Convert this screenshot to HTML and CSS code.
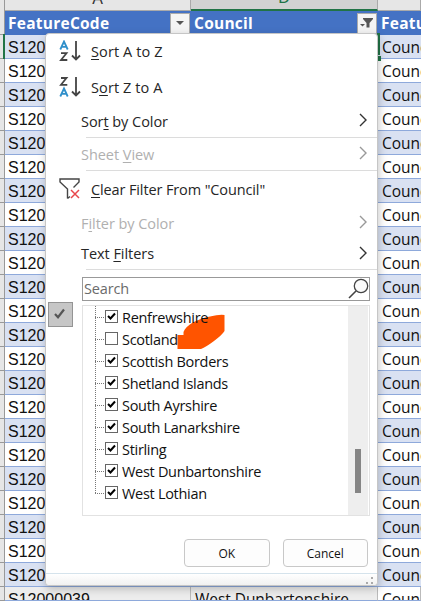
FILE: index.html
```html
<!DOCTYPE html>
<html lang="en">
<head>
<meta charset="utf-8">
<title>Council filter</title>
<link rel="stylesheet" href="styles.css">
</head>
<body>
<main class="sheet">
  <div class="letters"><i class="corner"></i><span>A</span><span class="selected">D</span><span></span></div>
  <div class="row head"><i class="rownum"></i><b>FeatureCode<span class="drop"><svg width="20" height="20"><path d="M6 8h8l-4 4z" fill="#555"/></svg></span></b><b>Council<span class="drop"><svg width="20" height="20"><path d="M6 5h10v1l-3.500 4v4.500h-3V10L6 6z" fill="#555"/><path d="M3 11h5l-2.500 2.500z" fill="#555"/></svg></span></b><b>FeatureType</b></div>
  <div id="rows"></div>
</main>
<i class="cell-edge"></i><i class="cell-handle"></i><i class="row-edge"></i>

<section class="menu">
  <div class="item sort"><svg class="icon" width="22" height="24"><g fill="none" stroke-width="1.800"><path d="M1.300 9.500L5 1.500l3.700 8M2.500 6.800h5" stroke="#2f8fca"/><path d="M2 13.200h5.500L2 20h6.300M17 1v18.500M13 15.500l4 4 4-4" stroke="#444"/></g></svg><span><u>S</u>ort A to Z</span></div>
  <div class="item sort"><svg class="icon" width="22" height="24"><g fill="none" stroke-width="1.800"><path d="M1.300 20.500L5 12.500l3.700 8M2.500 17.800h5" stroke="#2f8fca"/><path d="M2 2h5.500L2 8.800h6.300M17 1v18.500M13 15.500l4 4 4-4" stroke="#444"/></g></svg><span>S<u>o</u>rt Z to A</span></div>
  <div class="item color"><span>Sor<u>t</u> by Color</span><svg class="arrow" width="8" height="14"><path d="M1 1l6 6-6 6"/></svg></div>
  <hr>
  <div class="item view off"><span>Sheet <u>V</u>iew</span><svg class="arrow" width="8" height="14"><path d="M1 1l6 6-6 6"/></svg></div>
  <hr>
  <div class="item clear"><svg class="icon" width="22" height="22"><path d="M8.500 20.500V11L1 4V1h19v3l-5.500 5.500M8.500 20.500l2.500-2" fill="none" stroke="#444" stroke-width="1.400"/><path d="M12 12l8 8M20 12l-8 8" stroke="#e8474c" stroke-width="1.500"/></svg><span><u>C</u>lear Filter From "Council"</span></div>
  <div class="item filter off"><span>F<u>i</u>lter by Color</span><svg class="arrow" width="8" height="14"><path d="M1 1l6 6-6 6"/></svg></div>
  <div class="item text"><span>Text <u>F</u>ilters</span><svg class="arrow" width="8" height="14"><path d="M1 1l6 6-6 6"/></svg></div>
  <hr>
  <div class="search"><span>Search</span><svg width="22" height="22"><circle cx="14" cy="8" r="6.700" fill="#fafafa" stroke="#444" stroke-width="1.300"/><path d="M9 13l-7 7" stroke="#444" stroke-width="1.600"/></svg></div>
  <div class="list"><ul id="list"></ul><div class="track"><i></i></div></div>
  <div class="buttons"><button>OK</button><button>Cancel</button></div>
  <div class="foot"><svg width="8" height="8"><path d="M5 0h2v2H5zM0 5h2v2H0zM5 5h2v2H5z" fill="#aaa"/></svg></div>
  <span class="applied"><svg width="14" height="12"><path d="M2 6l3 3.200L11 1.500" fill="none" stroke="#555" stroke-width="2.200"/></svg></span>
  <svg class="scribble" width="48" height="36"><path d="M.5 35V21H6.500V18C9 11 20 5 33 2.500Q42 .3 47.500 1V17Q45 21 37 27Q29 33 24 35Z" fill="#ff5400"/></svg>
</section>
<script src="app.js"></script>
</body>
</html>
```
FILE: styles.css
```css
* { box-sizing: border-box; }
html, body { margin: 0; width: 421px; height: 601px; overflow: hidden; }
body { position: relative; background: #fff; font-family: "Open Sans", sans-serif; }
i { font-style: normal; }
.letters, .row { display: grid; grid-template-columns: 5px 186px 187px 43px; }
.letters { height: 11px; background: #e6e6e6; border-bottom: 1px solid #aaa; }
.letters span { display: flex; align-items: flex-end; justify-content: center; height: 10px; overflow: hidden; padding-bottom: 3px; border-right: 1px solid #aaa; font: 16px/16px "Liberation Sans", sans-serif; color: #333; }
.letters .selected { height: 11px; background: #d2d2d2; color: #217346; border-bottom: 2px solid #217346; }
.corner, .rownum { border-right: 1px solid #999; background: #e6e6e6; }
.row { height: 24px; }
.row span { overflow: hidden; white-space: nowrap; padding-left: 3px; font: 16px/25px "Liberation Sans", sans-serif; color: #111; border-bottom: 1px solid #8ea9db; }
.row .calibri { font: 15.5px/25px "Open Sans", sans-serif; letter-spacing: -.05px; padding-left: 4px; }
.row.odd span { background: #d9e1f2; }
.rownum { border-bottom: 1px solid #999; }
.row.last { height: 14px; overflow: hidden; }
.row.last span { background: #ededed; border-right: 1px solid #bbb; }
.row.last span:last-child { background: #fff; }
.head b { display: flex; justify-content: space-between; align-items: center; background: #4472c4; color: #fff; font: bold 15.5px/24px "Open Sans", sans-serif; padding-left: 3px; overflow: hidden; letter-spacing: .25px; }
.head .drop { display: block; width: 20px; height: 21px; margin: 1px 1px 0 0; padding: 0; border: 1px solid #ababab; background: #f4f4f4; line-height: 0; }
.drop svg { display: block; margin: -1px; }
.cell-edge { position: absolute; left: 377px; top: 33px; width: 3px; height: 22px; background: #217346; }
.cell-handle { position: absolute; left: 377px; top: 56px; width: 4px; height: 5px; background: #217346; }
.row-edge { position: absolute; left: 3px; top: 34px; width: 2px; height: 25px; background: #217346; }

.menu { position: absolute; left: 45px; top: 33px; width: 333px; height: 553px; background: #fff; border: 1px solid #c6c6c6; border-radius: 4px; box-shadow: 1px 3px 8px rgba(0,0,0,.22); display: flex; flex-direction: column; font-size: 14.5px; color: #262626; }
.item { display: flex; align-items: center; padding: 0 10px 0 35px; justify-content: space-between; white-space: nowrap; letter-spacing: -.05px; }
.item span { margin-top: -1px; }
.item u { text-underline-offset: 2px; text-decoration-thickness: 1px; }
.sort { height: 36px; justify-content: flex-start; padding-left: 13px; letter-spacing: .1px; }
.icon { width: 22px; margin-right: 10px; flex: none; }
.sort .icon { margin-top: -1px; }
.color { height: 31px; }
.view { height: 32px; }
.view span { margin-top: 1px; }
.clear { height: 37px; justify-content: flex-start; padding-left: 13px; letter-spacing: -.12px; }
.clear .icon { margin-top: -2px; }
.filter { height: 31px; }
.text { height: 30px; }
.arrow { fill: none; stroke: #333; stroke-width: 1.4; margin-top: -3px; }
.off { color: #b0b0b0; }
.off .arrow { stroke: #999; }
hr { width: 291px; height: 1px; border: 0; background: #dcdcdc; margin: 0 0 0 40px; flex: none; }
.search { height: 24px; margin: 7px 7px 0 36px; border: 1px solid #999; display: flex; justify-content: space-between; align-items: center; padding-left: 1px; color: #6b6b6b; letter-spacing: -.15px; }
.search span { margin-top: -2px; }
.list { position: relative; z-index: 1; height: 211px; margin: 4px 7px 0 36px; border: 1px solid #e2e2e2; display: flex; justify-content: space-between; overflow: hidden; }
.list ul { list-style: none; margin: 0; padding: 0 0 0 12px; }
.list li { height: 22px; display: flex; align-items: center; color: #111; white-space: nowrap; letter-spacing: -.3px; background: repeating-linear-gradient(#777 0 1px, transparent 1px 2px) 0 0 / 1px 22px no-repeat, repeating-linear-gradient(90deg, #777 0 1px, transparent 1px 2px) 0 11px / 9px 1px no-repeat; padding-left: 10px; }
.list li:last-child { background-size: 1px 11px, 9px 1px; }
.box { width: 13px; height: 13px; border: 1px solid #666; margin: -1px 4px 0 0; background: #fff; flex: none; }
.box svg { display: block; }
.track { width: 20px; background: #eee; margin-right: 1px; padding: 143px 0 0 7px; }
.track i { display: block; width: 6px; height: 44px; background: #858585; }
.buttons { height: 28px; margin: 23px 9px 0 138px; display: flex; gap: 13px; }
.buttons button { flex: 1; border: 1px solid #c8c8c8; border-radius: 4px; background: #fdfdfd; color: #111; font: 12px "Open Sans", sans-serif; padding: 0; }
.foot { margin-top: 6px; flex: 1; border-top: 1px solid #d5e3ec; border-radius: 0 0 4px 4px; background: linear-gradient(#fff, #f1f1f1); display: flex; justify-content: flex-end; padding: 3px 3px 0 0; }
.applied { position: absolute; left: 2px; top: 268px; width: 25px; height: 25px; border: 1px solid #949494; background: #c6c6c6; display: grid; place-items: center; padding: 0 2px 2px 0; }
.scribble { position: absolute; left: 131px; top: 280px; }
```
FILE: app.js
```js
const rows = document.getElementById('rows');
for (let i = 0; i < 24; i++) {
  const row = document.createElement('div');
  row.className = 'row' + (i % 2 === 0 ? ' odd' : '') + (i === 23 ? ' last' : '');
  row.innerHTML = i === 23
    ? '<i class="rownum"></i><span>S12000039</span><span class="calibri">West Dunbartonshire</span><span class="calibri">Council</span>'
    : '<i class="rownum"></i><span>S120</span><span></span><span class="calibri">Council</span>';
  rows.append(row);
}
const names = ['Renfrewshire', 'Scotland', 'Scottish Borders', 'Shetland Islands', 'South Ayrshire', 'South Lanarkshire', 'Stirling', 'West Dunbartonshire', 'West Lothian'];
document.getElementById('list').innerHTML = names.map(name =>
  `<li><i class="box">${name === 'Scotland' ? '' : '<svg width="11" height="11"><path d="M2 5l2.500 2.500L9 2.500" fill="none" stroke="#000" stroke-width="2"/></svg>'}</i>${name}</li>`).join('');
```
